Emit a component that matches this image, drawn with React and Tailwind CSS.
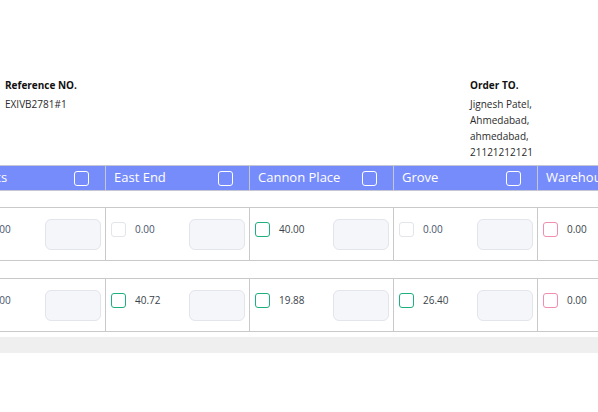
/**
 * Stock transfer sheet – reference / order header and a horizontally scrolled
 * grid of warehouse columns with quantity + input per row.
 */
const columns = [
  { name: 'Plants', rows: [{ box: 'off', qty: '0.00' }, { box: 'off', qty: '0.00' }] },
  { name: 'East End', rows: [{ box: 'off', qty: '0.00' }, { box: 'green', qty: '40.72' }] },
  { name: 'Cannon Place', rows: [{ box: 'green', qty: '40.00' }, { box: 'green', qty: '19.88' }] },
  { name: 'Grove', rows: [{ box: 'off', qty: '0.00' }, { box: 'green', qty: '26.40' }] },
  { name: 'Warehouse 2', rows: [{ box: 'pink', qty: '0.00' }, { box: 'pink', qty: '0.00' }] },
];

const boxStyles = {
  off: 'border-[#e3e5ea] bg-white',
  green: 'border-[#1fae7f] bg-white',
  pink: 'border-[#f08db0] bg-white',
};

function Cell({ row }) {
  return (
    <div className="w-[144px] shrink-0 border-r border-[#c9c9c9] flex items-start h-[52px]">
      <div className="flex items-center gap-[9px] pl-[5px] mt-[13px]">
        <span className={`block w-[15px] h-[15px] rounded-[3px] border ${boxStyles[row.box]}`} />
        <span className={`text-[10px] leading-4 ${row.box === 'off' ? 'text-[#46536a]' : 'text-[#3a3f4a]'}`}>
          {row.qty}
        </span>
      </div>
      <div className="ml-auto mr-[4px] mt-[11px] w-[56px] h-[31px] rounded-[6px] border border-[#e3e5ec] bg-[#f5f6f9]" />
    </div>
  );
}

export default function App() {
  return (
    <div className="w-[598px] h-[412px] bg-white overflow-hidden" style={{ fontFamily: '"Open Sans", sans-serif' }}>
      {/* Reference / order info */}
      <div className="flex pt-[77px] pl-[5px] h-[165px]">
        <div>
          <p className="text-[10px] leading-4 font-bold text-[#111]">Reference NO.</p>
          <p className="mt-[3px] text-[10px] leading-4 text-[#2b2b2b]">EXIVB2781#1</p>
        </div>
        <div className="ml-auto w-[128px]">
          <p className="text-[10px] leading-4 font-bold text-[#111]">Order TO.</p>
          <div className="mt-[3px] text-[10px] leading-4 text-[#2b2b2b]">
            <p>Jignesh Patel,</p>
            <p>Ahmedabad,</p>
            <p>ahmedabad,</p>
            <p>21121212121</p>
          </div>
        </div>
      </div>

      {/* Warehouse grid, scrolled sideways */}
      <div className="overflow-hidden">
        <div className="-ml-[38px] w-max">
          <div className="flex border-y border-[#c4c6d4] bg-[#778cfb]">
            {columns.map((c) => (
              <div key={c.name} className="w-[144px] shrink-0 h-[24px] border-r border-[#c4c6d4] flex items-center pl-[8px] pr-[16px]">
                <span className="text-[13px] text-white whitespace-nowrap">{c.name}</span>
                <span className="ml-auto block w-[15px] h-[15px] rounded-[3px] border border-white" />
              </div>
            ))}
          </div>

          {[0, 1].map((i) => (
            <div key={i} className={i === 0 ? 'mt-[16px]' : 'mt-[17px]'}>
              <div className="flex border-y border-[#c9c9c9]">
                {columns.map((c) => (
                  <Cell key={c.name} row={c.rows[i]} />
                ))}
              </div>
            </div>
          ))}
        </div>
      </div>

      {/* horizontal scrollbar track */}
      <div className="mt-[5px] h-[16px] bg-[#efefef]" />
    </div>
  );
}
